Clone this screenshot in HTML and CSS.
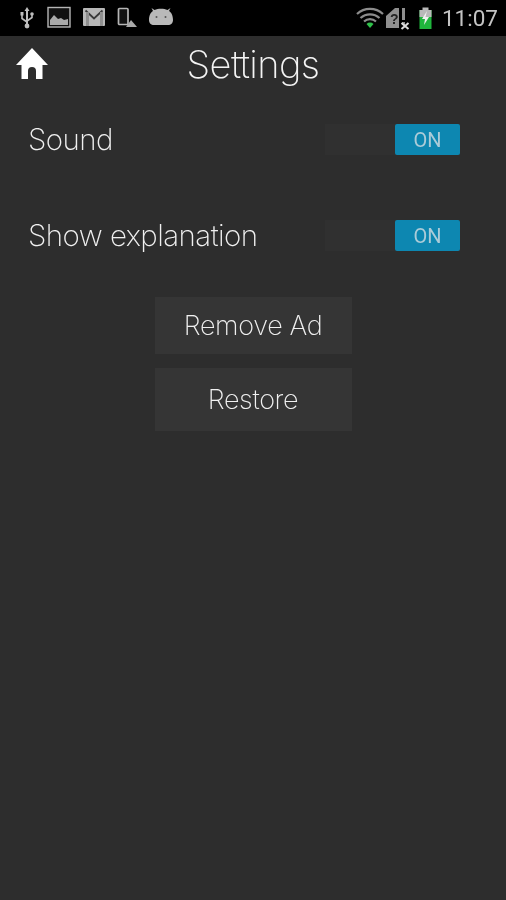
FILE: index.html
```html
<!DOCTYPE html>
<html lang="en">
<head>
<meta charset="utf-8">
<title>Settings</title>
<link rel="stylesheet" href="styles.css">
</head>
<body>
<div class="status">
  <div class="status-left">
    <svg class="ic" width="18" height="24" viewBox="0 0 18 24"><g fill="#bdbdbd"><rect x="8" y="4" width="2" height="16"/><path d="M9 1l2.500 4h-5z"/><circle cx="9" cy="20" r="2.400"/><rect x="2.500" y="6" width="3" height="3.500"/><circle cx="14" cy="8" r="1.800"/></g><path d="M4 9v3.500l5 3.500M14 9v2.500l-5 3.500" fill="none" stroke="#bdbdbd" stroke-width="1.600"/></svg>
    <svg class="ic" width="24" height="24" viewBox="0 0 24 24"><rect x="1" y="1.500" width="22" height="19.500" fill="#111" stroke="#b5b5b5" stroke-width="1.400"/><path d="M3 19v-5l4-5 4 4 3-1 3 2 4-1v6z" fill="#aaa"/></svg>
    <svg class="ic" width="24" height="24" viewBox="0 0 24 24"><rect x="1" y="2" width="22" height="18" rx="1" fill="#b8b8b8"/><path d="M3.500 4.500l8.500 8 8.500-8" fill="none" stroke="#3a3a3a" stroke-width="1.800"/><rect x="4" y="6" width="3" height="14" fill="#8f8f8f"/><rect x="18" y="6" width="3" height="14" fill="#8f8f8f"/></svg>
    <svg class="ic" width="20" height="24" viewBox="0 0 20 24"><rect x="1.500" y="2.500" width="9.500" height="16" rx="1" fill="#111" stroke="#b5b5b5" stroke-width="1.700"/><path d="M9 21l5-7 6 7z" fill="#a9a9a9"/></svg>
    <svg class="ic" width="26" height="24" viewBox="0 0 26 24"><path d="M1 14c0-5 2-8 4-9L3.500 2l3 2c2-.8 4-1.200 6.500-1.200S17.500 3.200 19.500 4l3-2L21 5c2 1 4 4 4 9 0 3-2 5-5 5H6c-3 0-5-2-5-5z" fill="#b9b9b9"/><circle cx="8.500" cy="11" r="1" fill="#555"/><circle cx="17.500" cy="11" r="1" fill="#555"/></svg>
  </div>
  <div class="status-right">
    <svg class="ic" width="28" height="24" viewBox="0 0 28 24"><path d="M1 8a19 19 0 0 1 26 0M4.500 12a14 14 0 0 1 19 0M8 15.500a9 9 0 0 1 12 0" fill="none" stroke="#8c8c8c" stroke-width="2.200"/><path d="M10.500 18a5 5 0 0 1 7 0L14 22z" fill="#2fc04a"/></svg>
    <span class="signal">
      <svg class="ic" width="26" height="24" viewBox="0 0 26 24"><path d="M1 22V10l9-8h4v20z" fill="#8f8f8f"/><rect x="17" y="2" width="3" height="12" fill="#8f8f8f"/><rect x="17" y="16" width="3" height="3" fill="#8f8f8f"/><path d="M16.500 17l7 6m0-6l-7 6" stroke="#ddd" stroke-width="2"/></svg>
      <span class="signal-q">?</span>
    </span>
    <svg class="ic batt" width="15" height="24" viewBox="0 0 14 24"><rect x="1" y="4" width="12" height="19" fill="#1fb53c"/><rect x="1" y="4" width="12" height="7" fill="#b9b9b9"/><rect x="4" y="1.500" width="6" height="3" fill="#b9b9b9"/><path d="M8.500 5L3.500 13h3l-1 6 5-8H7z" fill="#f0f0f0"/></svg>
    <span class="clock">11:07</span>
  </div>
</div>
<main class="screen">
  <header class="head">
    <svg class="home" width="32" height="32" viewBox="0 0 32 32"><path d="M16 0L0 17h5.500v14h6.500v-8a4 4 0 0 1 8 0v8h6.500V17H32z" fill="#fff"/></svg>
    <h1 class="title">Settings</h1>
  </header>
  <div class="row">
    <span class="label">Sound</span>
    <div class="toggle"><span class="on">ON</span></div>
  </div>
  <div class="row">
    <span class="label">Show explanation</span>
    <div class="toggle"><span class="on">ON</span></div>
  </div>
  <div class="actions">
    <button class="btn btn-a">Remove Ad</button>
    <button class="btn btn-b">Restore</button>
  </div>
</main>
</body>
</html>
```
FILE: styles.css
```css
* { box-sizing: border-box; }
html, body { margin: 0; height: 100%; }
body {
  background: #2d2d2d;
  font-family: "Inter", "Liberation Sans", sans-serif;
  color: #f0f0f0;
  height: 900px;
  overflow: hidden;
}
.status {
  height: 36px;
  background: #000;
  display: flex;
  justify-content: space-between;
  align-items: center;
  padding: 0 8px 0 18px;
  filter: blur(0.5px);
}
.status-left { display: flex; align-items: center; gap: 11px; }
.status-right { display: flex; align-items: center; gap: 1px; }
.ic { display: block; }
.batt { margin-left: 6px; }
.signal { position: relative; display: block; }
.signal-q {
  position: absolute;
  left: 5px;
  top: 5px;
  font: bold 14px "Liberation Sans", sans-serif;
  color: #222;
}
.clock {
  font: 400 22.500px "Roboto", sans-serif;
  color: #c4c4c4;
  margin-left: 8px;
}
.screen { filter: blur(0.4px); }
.head {
  height: 60px;
  padding-bottom: 4px;
  display: flex;
  align-items: center;
  justify-content: center;
  position: relative;
}
.home { position: absolute; left: 16px; top: 12px; }
.title {
  margin: 0;
  font-size: 38px;
  font-weight: 200;
  letter-spacing: -0.600px;
  color: #f4f4f4;
}
.row {
  display: flex;
  align-items: center;
  justify-content: space-between;
  height: 31px;
  margin: 28px 46px 0 28px;
}
.row + .row { margin-top: 65px; }
.label {
  font-size: 29.500px;
  font-weight: 200;
  letter-spacing: -0.550px;
  padding-bottom: 2px;
}
.toggle {
  width: 135px;
  height: 31px;
  background: #303030;
  display: flex;
  justify-content: flex-end;
}
.on {
  width: 65px;
  background: #0d87b1;
  border-radius: 2px;
  color: #aacbd8;
  font: 400 20px "Roboto", sans-serif;
  display: flex;
  align-items: center;
  justify-content: center;
}
.actions {
  display: flex;
  flex-direction: column;
  align-items: center;
  gap: 14px;
  margin-top: 46px;
}
.btn {
  width: 197px;
  background: #353535;
  border: 0;
  padding: 0;
  color: #f0f0f0;
  font-family: inherit;
  font-size: 27px;
  font-weight: 200;
  letter-spacing: -0.350px;
}
.btn-a { height: 57px; }
.btn-b { height: 63px; }
```
